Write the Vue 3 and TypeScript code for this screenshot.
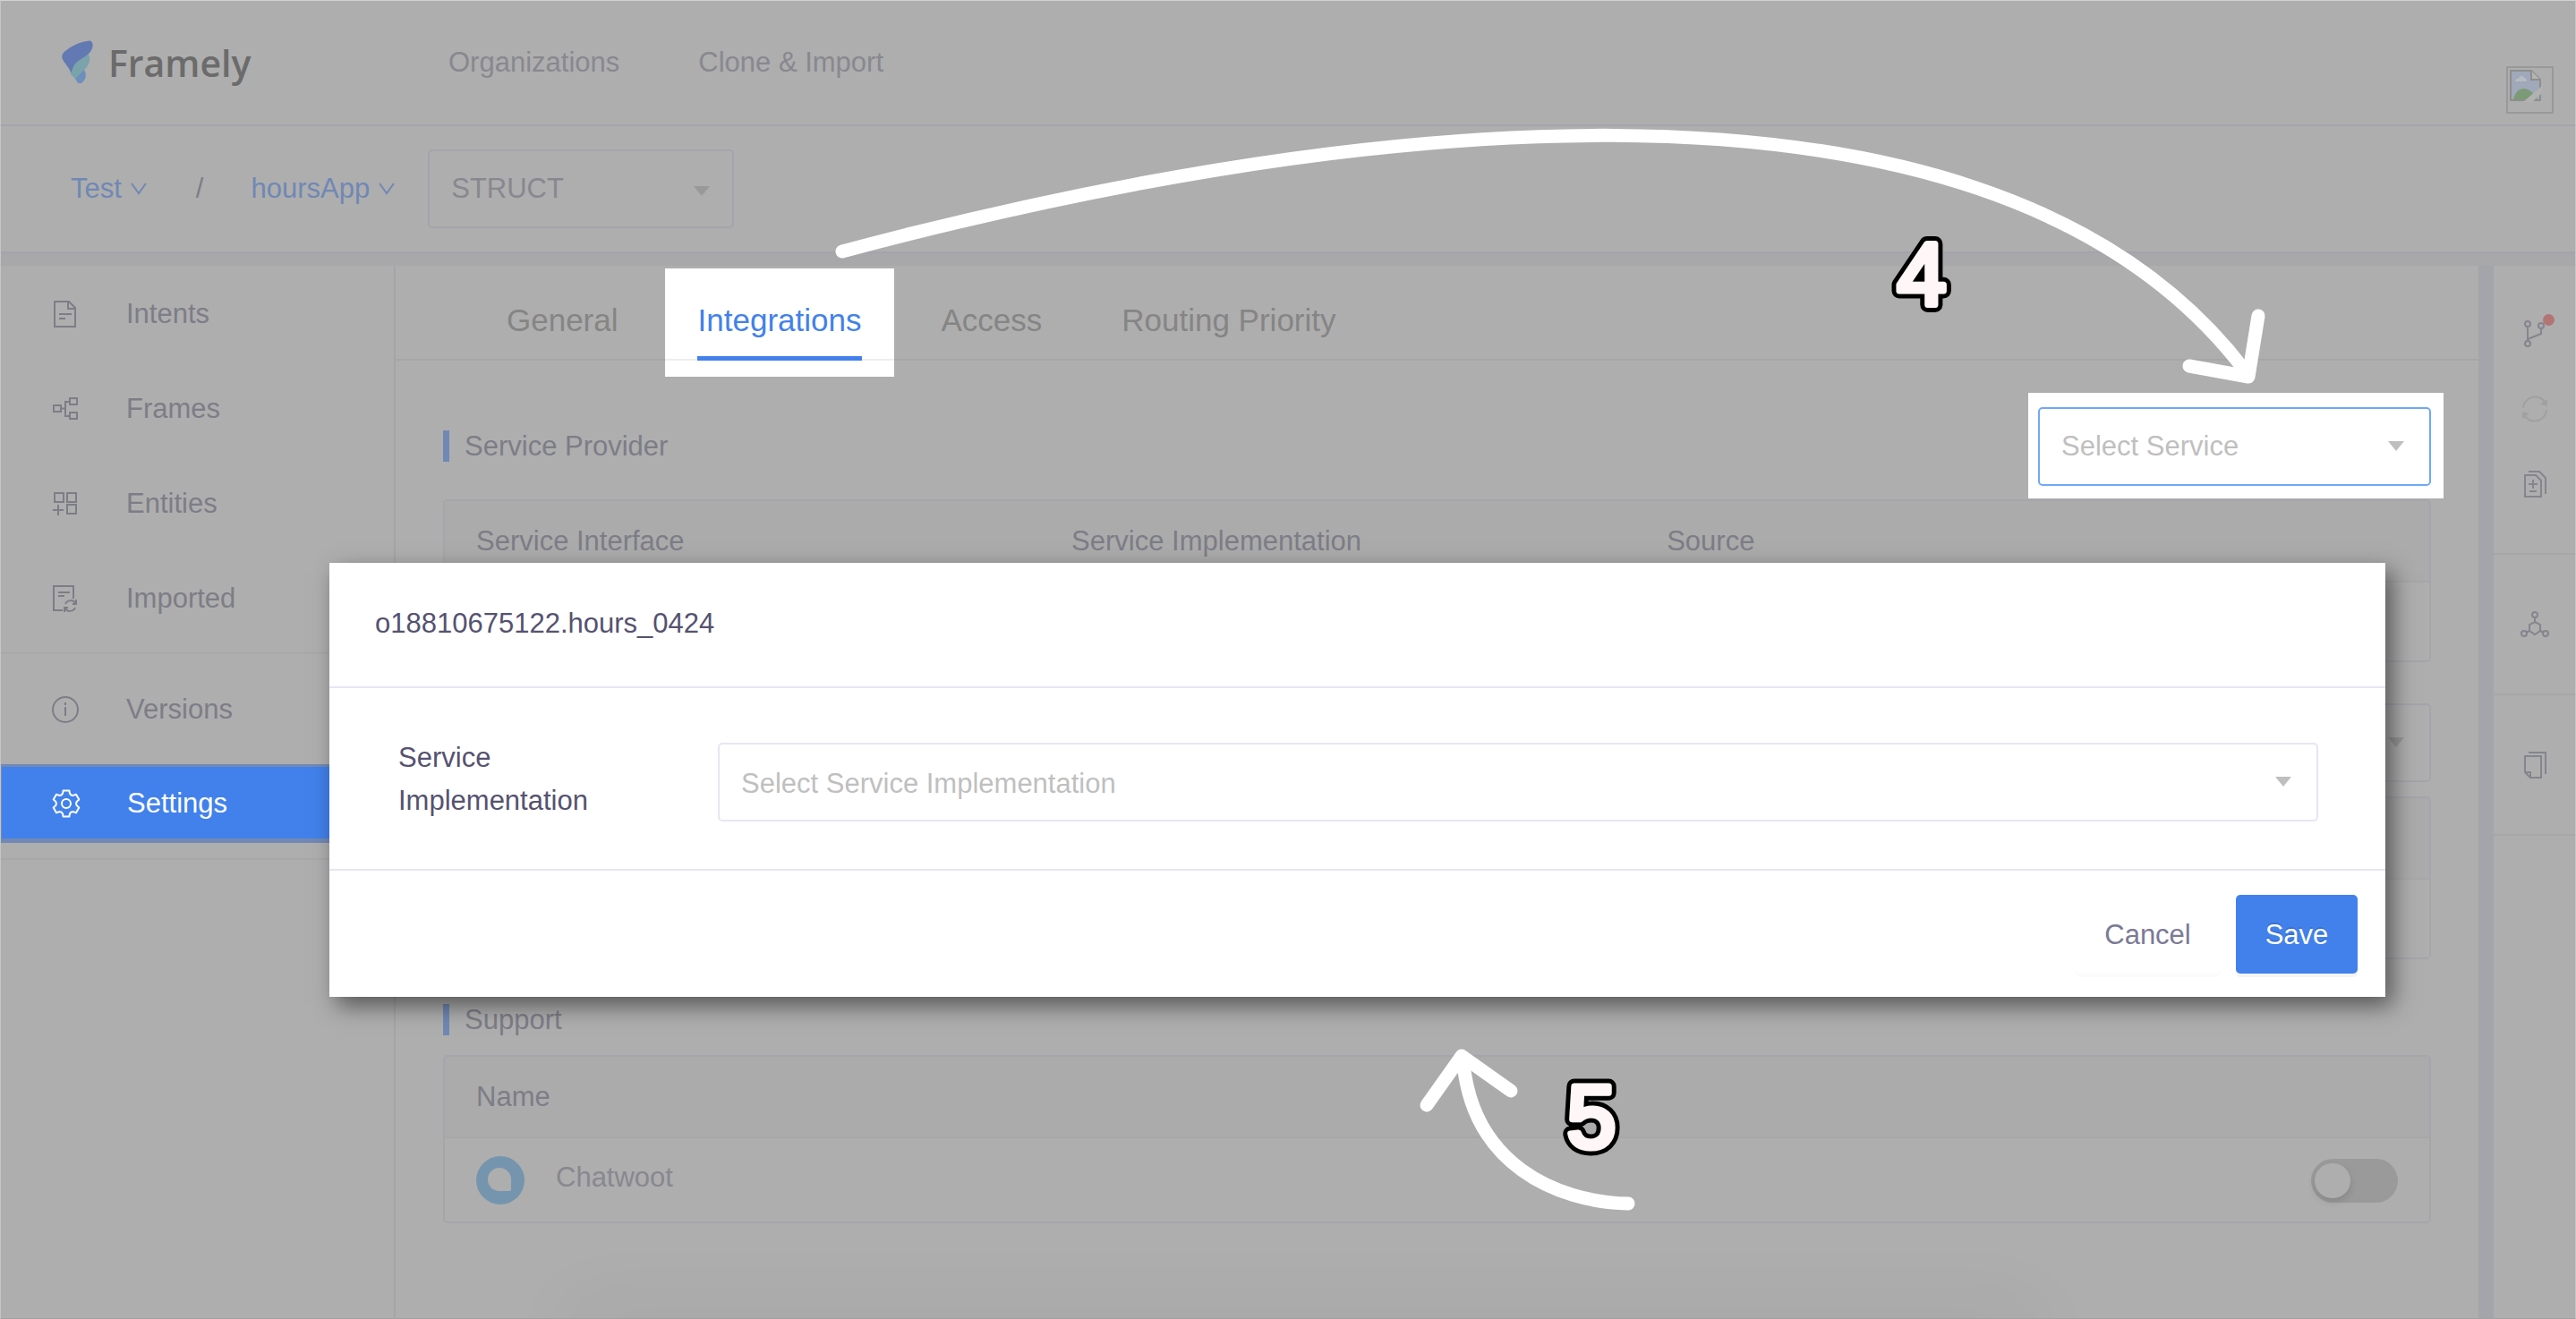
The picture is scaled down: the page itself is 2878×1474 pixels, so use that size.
<script setup lang="ts">
import { ref } from 'vue'

interface NavItem { id: string; label: string }

const mainNav: NavItem[] = [
  { id: 'intents', label: 'Intents' },
  { id: 'frames', label: 'Frames' },
  { id: 'entities', label: 'Entities' },
  { id: 'imported', label: 'Imported' },
]
const tabs = ['General', 'Integrations', 'Access', 'Routing Priority']
const activeTab = ref('Integrations')
const chatwootOn = ref(false)

// Outline of the six-toothed settings gear around (16, 16)
const gearPoints = Array.from({ length: 6 }, (_, i) => {
  const base = -90 + i * 60
  return [[-30, 11], [-19, 12], [-13, 15], [13, 15], [19, 12]].map(([a, r]) => {
    const rad = ((base + a) * Math.PI) / 180
    return `${(16 + r * Math.cos(rad)).toFixed(1)},${(16 + r * Math.sin(rad)).toFixed(1)}`
  }).join(' ')
}).join(' ')
</script>

<template>
  <div class="page">
    <header class="topbar">
      <a class="brand" href="#">
        <svg width="36" height="50" viewBox="0 0 36 50" aria-hidden="true">
          <path d="M29 14c4 7 2 13-3 18L17 44C10 40 8 35 9 30z" fill="#7ba3ab" />
          <path d="M28 1C33-1 36 3 34 9 32 15 26 18 20 22 13 27 12 31 11 36L4 26C-1 20-1 16 4 12 10 7 20 2 28 1z" fill="#6379b3" />
          <path d="M15 43l10-10c3 5 2 10-1 13-2 3-6 3-7 0z" fill="#6d8fbc" />
        </svg>
        <span class="brand-name">Framely</span>
      </a>
      <nav class="top-links">
        <a href="#">Organizations</a>
        <a href="#">Clone &amp; Import</a>
      </nav>
      <div class="avatar" role="img" aria-label="avatar">
        <svg width="36" height="36" viewBox="0 0 36 36">
          <path d="M1 1h23l10 10v23H1z" fill="#a0a9ba" stroke="#8e8e8e" stroke-width="2" />
          <path d="M24 1v10h10" fill="#b4b4b4" stroke="#8e8e8e" stroke-width="2" />
          <path d="M4 33c4-16 18-16 27 0z" fill="#7b9a76" />
          <path d="M6 13c1-4 4-3 5-5 3-3 5 0 5 1 2 0 3 2 3 4z" fill="#b8bcc2" />
          <path d="M15 36L36 18v8L25 36z" fill="#b2b2b2" />
        </svg>
      </div>
    </header>

    <div class="crumbs">
      <a class="crumb" href="#">Test
        <svg width="18" height="14" viewBox="0 0 18 14"><path d="M1 1l8 11 8-11" /></svg>
      </a>
      <span class="slash">/</span>
      <a class="crumb" href="#">hoursApp
        <svg width="18" height="14" viewBox="0 0 18 14"><path d="M1 1l8 11 8-11" /></svg>
      </a>
      <div class="select struct">
        <select aria-label="Branch type"><option>STRUCT</option></select>
        <i class="caret"></i>
      </div>
    </div>
    <div class="band"></div>

    <div class="body">
      <aside class="sidebar">
        <nav class="nav-group">
          <a v-for="n in mainNav" :key="n.id" class="nav-item" href="#">
            <span class="nav-icon">
              <svg v-if="n.id === 'intents'" width="26" height="30" viewBox="0 0 26 30"><path d="M1 1h16l7 7v21H1zM16 1v8h8M6 15h14M6 20h7" /></svg>
              <svg v-else-if="n.id === 'frames'" width="28" height="26" viewBox="0 0 28 26"><path d="M1 9h8v7H1zM19 1h8v7h-8zM19 17h8v7h-8zM9 12.500h5M19 5h-5v16h5" /></svg>
              <svg v-else-if="n.id === 'entities'" width="28" height="26" viewBox="0 0 28 26"><path d="M2 1h10v10H2zM16 1h10v10H16zM16 14h10v10H16zM0 20h12M6 14v12" /></svg>
              <svg v-else width="28" height="30" viewBox="0 0 28 30"><path d="M11 28H1V1h22v14M6 8h13M6 12h7M14 21c2-5 9-5 11-1M25 25c-2 5-9 5-11 1M26 16v5h-4M13 30v-5h4" /></svg>
            </span>
            {{ n.label }}
          </a>
        </nav>
        <nav class="nav-group second">
          <a class="nav-item" href="#">
            <span class="nav-icon">
              <svg width="32" height="32" viewBox="0 0 32 32"><circle cx="16" cy="16" r="14" /><path d="M16 13v10M16 8v3" /></svg>
            </span>
            Versions
          </a>
          <a class="nav-item current" href="#" aria-current="page">
            <span class="nav-icon">
              <svg width="32" height="32" viewBox="0 0 32 32"><polygon :points="gearPoints" stroke-linejoin="round" /><circle cx="16" cy="16" r="5" /></svg>
            </span>
            Settings
          </a>
        </nav>
      </aside>

      <main class="content">
        <nav class="tabs">
          <a v-for="t in tabs" :key="t" href="#" class="tab" :class="{ active: t === activeTab }" @click.prevent="activeTab = t">
            <span>{{ t }}</span>
          </a>
        </nav>

        <div class="sections">
          <section class="section">
            <div class="section-head">
              <h2>Service Provider</h2>
              <div class="spotlight">
                <div class="select service">
                  <select aria-label="Select Service"><option>Select Service</option></select>
                  <i class="caret"></i>
                </div>
              </div>
            </div>
            <table class="grid">
              <thead>
                <tr><th>Service Interface</th><th>Service Implementation</th><th>Source</th><th class="narrow"></th></tr>
              </thead>
              <tbody><tr><td></td><td></td><td></td><td></td></tr></tbody>
            </table>
          </section>

          <section class="section">
            <div class="section-head">
              <div class="select service dim">
                <select aria-label="Select component"><option></option></select>
                <i class="caret"></i>
              </div>
            </div>
            <table class="grid">
              <thead><tr><th></th></tr></thead>
              <tbody><tr><td></td></tr></tbody>
            </table>
          </section>

          <section class="section">
            <h2>Support</h2>
            <table class="grid support">
              <thead><tr><th colspan="2">Name</th></tr></thead>
              <tbody>
                <tr>
                  <td>
                    <div class="app">
                      <svg width="54" height="54" viewBox="0 0 54 54" aria-hidden="true">
                        <circle cx="27" cy="27" r="27" fill="#7595ae" />
                        <path d="M26 13a13 13 0 0 1 13 13v11q0 2-2 2H26a13 13 0 0 1 0-26z" fill="#aeaeae" />
                      </svg>
                      <span>Chatwoot</span>
                    </div>
                  </td>
                  <td class="switch-cell">
                    <input v-model="chatwootOn" class="switch" type="checkbox" role="switch" aria-label="Enable Chatwoot" />
                  </td>
                </tr>
              </tbody>
            </table>
          </section>
        </div>
        <div class="dock-shade"></div>
      </main>

      <aside class="rail">
        <div class="rail-group tools">
          <button type="button" aria-label="Branches">
            <svg width="30" height="32" viewBox="0 0 30 32"><circle cx="7" cy="5" r="3" /><circle cx="22" cy="7" r="3" /><circle cx="7" cy="27" r="3" /><path d="M7 8v16M22 10v6L7 22" /></svg>
            <span class="dot"></span>
          </button>
          <button type="button" aria-label="Refresh" disabled>
            <svg width="30" height="30" viewBox="0 0 30 30"><path d="M2 14C3 0 22-3 27 9M28 16C27 30 8 33 3 21" /><path d="M29 4v8l-8-2zM1 26v-8l8 2z" fill="currentColor" stroke="none" /></svg>
          </button>
          <button type="button" aria-label="Changes">
            <svg width="30" height="32" viewBox="0 0 30 32"><path d="M4 6h12l6 6v18H4zM8 2h12l7 7v18M13 11v10M8 16h10M9 24h8" /></svg>
          </button>
        </div>
        <div class="rail-group">
          <button type="button" aria-label="Graph">
            <svg width="32" height="30" viewBox="0 0 32 30"><circle cx="16" cy="4" r="3" /><circle cx="4" cy="25" r="3" /><circle cx="28" cy="25" r="3" /><path d="M16 7v5M16 12l6 3v7l-6 4-6-4v-7zM10 22l-4 2M22 22l4 2" /></svg>
          </button>
        </div>
        <div class="rail-group">
          <button type="button" aria-label="Copies">
            <svg width="30" height="32" viewBox="0 0 30 32"><path d="M4 6h18v24H10l-6-6zM4 24h6v6M8 2h19v24" /></svg>
          </button>
        </div>
      </aside>
    </div>

    <form class="modal" role="dialog" aria-labelledby="modal-title" @submit.prevent>
      <h1 id="modal-title">o18810675122.hours_0424</h1>
      <div class="modal-body">
        <label for="impl">Service Implementation</label>
        <div class="select impl">
          <select id="impl"><option>Select Service Implementation</option></select>
          <i class="caret"></i>
        </div>
      </div>
      <footer>
        <button class="btn" type="button">Cancel</button>
        <button class="btn primary" type="submit">Save</button>
      </footer>
    </form>

    <!-- Walkthrough marks drawn over the page -->
    <svg class="marks" width="2878" height="1474" viewBox="0 0 2878 1474" aria-hidden="true">
      <g class="arrow">
        <path d="M941 281C1442 147 2212 25 2508 414" />
        <path d="M2446 409L2512 421 2523 353" />
        <path d="M1819 1345C1737 1343 1646 1300 1635 1188" />
        <path d="M1594 1235L1633 1180 1688 1219" />
      </g>
      <g class="step">
        <text class="edge" x="2147" y="340">4</text>
        <text class="face" x="2147" y="340">4</text>
        <text class="edge" x="1778" y="1282">5</text>
        <text class="face" x="1778" y="1282">5</text>
      </g>
    </svg>
  </div>
</template>

<style>
body { margin: 0; background: #aeaeae; }
</style>

<style scoped>
* { box-sizing: border-box; }
.page {
  position: relative;
  min-height: 100vh;
  display: flex;
  flex-direction: column;
  overflow: hidden;
  border: 1px solid #c6c6c6;
  border-top-color: #d2d2d2;
  border-bottom-color: #a2a2a2;
  background: #aeaeae;
  color: #7d7d87;
  font-family: "Liberation Sans", Arial, sans-serif;
  font-size: 31px;
  line-height: 48px;
}
a { color: inherit; text-decoration: none; }
svg { display: block; }

.topbar {
  display: flex;
  align-items: center;
  height: 140px;
  padding: 0 24px 0 68px;
  border-bottom: 2px solid #a4a4ac;
  color: #88888f;
}
.brand { display: flex; align-items: center; gap: 16px; width: 432px; color: #6b6b6b; }
.brand-name { font: 600 41px/60px "Open Sans", "Noto Sans", sans-serif; }
.top-links { display: flex; gap: 88px; flex: 1; }
.avatar {
  width: 53px;
  height: 53px;
  padding: 2px;
  margin-top: 60px;
  border: 2px solid #999;
}

.crumbs { display: flex; align-items: center; height: 140px; padding-left: 78px; }
.crumb { display: flex; align-items: center; gap: 10px; color: #7088b4; }
.crumb svg { fill: none; stroke: currentColor; stroke-width: 2; }
.slash { margin: 0 53px 0 55px; }
.band { height: 16px; border-top: 2px solid #a4a4ac; background: #a8a8ab; }

.select { position: relative; height: 88px; }
.select select {
  width: 100%;
  height: 100%;
  padding: 0 56px 0 24px;
  appearance: none;
  border: 2px solid #a4a4ac;
  border-radius: 5px;
  background: transparent;
  color: inherit;
  font: inherit;
  opacity: 1;
}
.caret {
  position: absolute;
  top: 38px;
  right: 30px;
  border: 9px solid transparent;
  border-top: 11px solid #bfbfbf;
  border-bottom: 0;
  pointer-events: none;
}
.struct { width: 342px; margin-left: 37px; color: #88888f; }
.struct .caret, .dim .caret { border-top-color: #999; }
.struct .caret { top: 41px; right: 27px; }

.body { display: flex; flex: 1; }
.sidebar { width: 439px; }
.nav-group { padding-bottom: 8px; border-bottom: 2px solid #a8a8a8; }
.second { padding-top: 8px; }
.nav-item { display: flex; align-items: center; height: 106px; padding: 2px 0 0 56px; }
.nav-icon { display: flex; justify-content: center; width: 32px; margin-right: 52px; }
.nav-icon svg, .rail svg { fill: none; stroke: currentColor; stroke-width: 2; }
.current {
  height: 88px;
  margin: 9px 0;
  border: solid #7289b5;
  border-width: 3px 0 5px 1px;
  background: #4281eb;
  color: #fff;
}

.content { position: relative; flex: 1; min-width: 0; border-left: 2px solid #a4a4ac; }
.tabs {
  position: relative;
  display: flex;
  gap: 15px;
  height: 106px;
  padding: 0 87px;
  border-bottom: 2px solid #a6a6a6;
  font-size: 35px;
  color: #858585;
}
.tab { display: flex; padding: 3px 37px 0; }
.tab span { display: flex; align-items: center; height: 116px; }
.active { position: relative; height: 121px; margin-top: 3px; padding-top: 0; background: #fff; color: #4281eb; }
.active::before { content: ""; position: absolute; left: 0; right: 0; top: 101px; height: 2px; background: #eee; }
.active::after { content: ""; position: absolute; left: 36px; right: 36px; top: 98px; height: 5px; background: #4281eb; }

.sections { padding: 51px 53px 0; }
.section { margin-bottom: 46px; }
.section-head { display: flex; align-items: center; justify-content: space-between; height: 88px; margin-bottom: 16px; }
.section-head > :only-child { margin-left: auto; }
h2 { margin: 0; padding-left: 17px; border-left: 7px solid #7088b4; font-size: 31px; line-height: 35px; font-weight: 400; }
.section > h2 { margin: 50px 0 22px; }
.spotlight { margin: 0 -14px 0 auto; padding: 16px 14px 14px 11px; background: #fff; }
.service { width: 439px; color: #bfbfbf; }
.service:not(.dim) select { border-color: #6fa8f8; background: #fff; }

.grid {
  width: 100%;
  table-layout: fixed;
  border: 2px solid #a5a5ab;
  border-radius: 5px;
  border-spacing: 0;
}
.grid th { height: 91px; padding: 0 35px; border-bottom: 2px solid #a7a7a8; background: #ababab; font-weight: 400; text-align: left; }
.grid td { height: 87px; padding: 0 35px; }
.narrow { width: 10%; }
.support td { height: 93px; }
.app { display: flex; align-items: center; gap: 35px; color: #88888f; }
.app span { padding-bottom: 6px; }
.switch-cell { text-align: right; }
.switch {
  width: 97px;
  height: 49px;
  margin: 0;
  padding: 5px 4px;
  appearance: none;
  border-radius: 25px;
  background: #9a9a9a;
  vertical-align: middle;
}
.switch::before {
  content: "";
  display: block;
  width: 40px;
  height: 39px;
  border-radius: 20px;
  background: #aeaeae;
  box-shadow: 0 4px 8px rgba(0, 0, 0, .12);
}
.switch:checked::before { margin-left: auto; }
.dock-shade {
  position: absolute;
  left: 200px;
  right: 500px;
  bottom: -24px;
  height: 24px;
  box-shadow: 0 0 90px 10px rgba(0, 0, 0, .06);
}

.rail { width: 108px; border-left: 17px solid #a4a4ab; color: #85858e; }
.rail-group { display: flex; flex-direction: column; align-items: center; justify-content: center; height: 157px; border-bottom: 2px solid #a7a7a7; }
.tools { height: 323px; gap: 36px; padding-bottom: 2px; }
.rail button { position: relative; display: grid; place-items: center; width: 48px; height: 48px; padding: 0; border: 0; background: none; color: inherit; }
.rail button:disabled { color: #a0a0a0; }
.dot { position: absolute; top: 2px; right: 2px; width: 13px; height: 13px; border-radius: 50%; background: #b37474; }

.modal {
  position: absolute;
  top: 628px;
  left: 367px;
  right: 212px;
  background: #fff;
  color: #555270;
  box-shadow: 8px 10px 24px rgba(0, 0, 0, .5);
}
.modal h1 { margin: 0; padding: 44px 51px 46px; border-bottom: 2px solid #e7e6f4; font-size: 31px; line-height: 48px; font-weight: 400; }
.modal-body { display: flex; align-items: flex-start; padding: 54px 75px 52px 77px; border-bottom: 2px solid #e7e6f4; }
.modal-body label { width: 357px; padding-right: 100px; }
.impl { flex: 1; margin-top: 7px; color: #bfbfbf; }
.impl select { padding-top: 4px; border-color: #e7e6f4; }
footer { display: flex; justify-content: flex-end; gap: 18px; padding: 27px 31px 26px; }
.btn { height: 88px; padding: 2px 32px 0; border: 0; border-radius: 5px; background: #fff; color: #7b7a95; font: inherit; box-shadow: 0 4px 0 rgba(0, 0, 0, .015); }
.btn:first-child { width: 161px; }
.primary { width: 136px; background: #4281eb; color: #fff; box-shadow: 0 4px 0 rgba(0, 0, 0, .045); text-shadow: 0 -2px 0 rgba(0, 0, 0, .12); }

.marks { position: absolute; top: -1px; left: -1px; pointer-events: none; }
.arrow { fill: none; stroke: #fff; stroke-width: 15; stroke-linecap: round; stroke-linejoin: round; }
.step { font: 400 98px "Liberation Sans", Arial, sans-serif; text-anchor: middle; stroke-linejoin: round; stroke-linecap: round; }
.edge { fill: #000; stroke: #000; stroke-width: 17; }
.face { fill: #fff7f7; stroke: #fff7f7; stroke-width: 7; }
</style>
